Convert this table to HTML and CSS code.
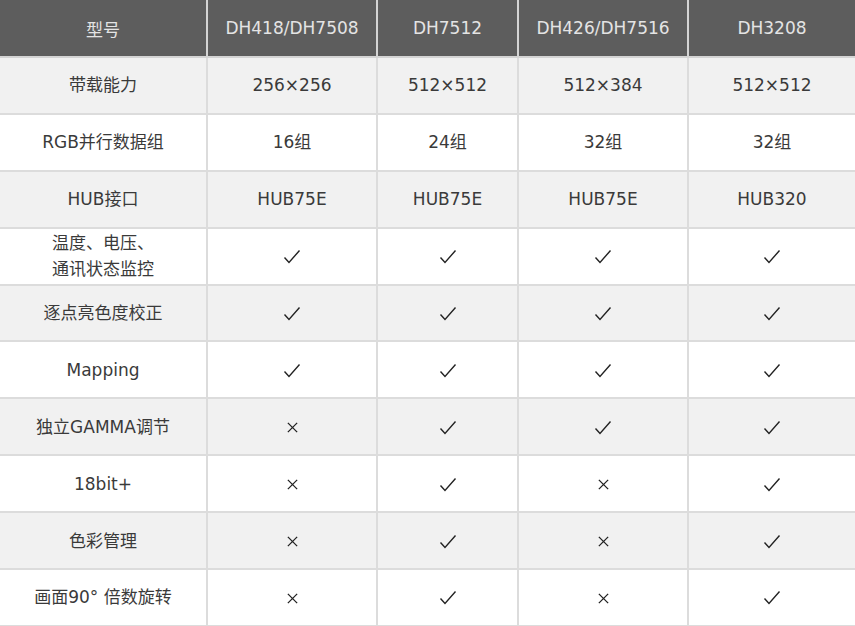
FILE: index.html
```html
<!DOCTYPE html>
<html lang="zh-CN">
<head>
<meta charset="utf-8">
<title>型号对比</title>
<link rel="stylesheet" href="styles.css">
</head>
<body>
<svg width="0" height="0" class="defs">
  <defs>
    <symbol id="ok" viewBox="0 0 18 16"><path d="M1.5 8.5 L6 13.5 L16.5 1.5" fill="none" stroke="#222" stroke-width="1.4" stroke-linejoin="miter"/></symbol>
    <symbol id="no" viewBox="0 0 14 14"><path d="M2 2 L12 12 M12 2 L2 12" fill="none" stroke="#222" stroke-width="1.4"/></symbol>
  </defs>
</svg>
<table class="spec">
  <colgroup>
    <col class="c0"><col class="c1"><col class="c2"><col class="c3"><col class="c4">
  </colgroup>
  <thead>
    <tr><th>型号</th><th>DH418/DH7508</th><th>DH7512</th><th>DH426/DH7516</th><th>DH3208</th></tr>
  </thead>
  <tbody>
    <tr class="alt"><td>带载能力</td><td>256×256</td><td>512×512</td><td>512×384</td><td>512×512</td></tr>
    <tr><td>RGB并行数据组</td><td>16组</td><td>24组</td><td>32组</td><td>32组</td></tr>
    <tr class="alt"><td>HUB接口</td><td>HUB75E</td><td>HUB75E</td><td>HUB75E</td><td>HUB320</td></tr>
    <tr><td>温度、电压、<br>通讯状态监控</td>
      <td><svg class="ic ok"><use href="#ok"/></svg></td><td><svg class="ic ok"><use href="#ok"/></svg></td><td><svg class="ic ok"><use href="#ok"/></svg></td><td><svg class="ic ok"><use href="#ok"/></svg></td></tr>
    <tr class="alt"><td>逐点亮色度校正</td>
      <td><svg class="ic ok"><use href="#ok"/></svg></td><td><svg class="ic ok"><use href="#ok"/></svg></td><td><svg class="ic ok"><use href="#ok"/></svg></td><td><svg class="ic ok"><use href="#ok"/></svg></td></tr>
    <tr><td>Mapping</td>
      <td><svg class="ic ok"><use href="#ok"/></svg></td><td><svg class="ic ok"><use href="#ok"/></svg></td><td><svg class="ic ok"><use href="#ok"/></svg></td><td><svg class="ic ok"><use href="#ok"/></svg></td></tr>
    <tr class="alt"><td>独立GAMMA调节</td>
      <td><svg class="ic no"><use href="#no"/></svg></td><td><svg class="ic ok"><use href="#ok"/></svg></td><td><svg class="ic ok"><use href="#ok"/></svg></td><td><svg class="ic ok"><use href="#ok"/></svg></td></tr>
    <tr><td>18bit+</td>
      <td><svg class="ic no"><use href="#no"/></svg></td><td><svg class="ic ok"><use href="#ok"/></svg></td><td><svg class="ic no"><use href="#no"/></svg></td><td><svg class="ic ok"><use href="#ok"/></svg></td></tr>
    <tr class="alt"><td>色彩管理</td>
      <td><svg class="ic no"><use href="#no"/></svg></td><td><svg class="ic ok"><use href="#ok"/></svg></td><td><svg class="ic no"><use href="#no"/></svg></td><td><svg class="ic ok"><use href="#ok"/></svg></td></tr>
    <tr><td>画面90°&nbsp;倍数旋转</td>
      <td><svg class="ic no"><use href="#no"/></svg></td><td><svg class="ic ok"><use href="#ok"/></svg></td><td><svg class="ic no"><use href="#no"/></svg></td><td><svg class="ic ok"><use href="#ok"/></svg></td></tr>
  </tbody>
</table>
</body>
</html>
```

FILE: styles.css
```css
html, body {
  margin: 0;
  padding: 0;
  background: #ffffff;
}
.defs {
  position: absolute;
  width: 0;
  height: 0;
  overflow: hidden;
}
.spec {
  width: 855px;
  table-layout: fixed;
  border-collapse: collapse;
  font-family: "DejaVu Sans", "Noto Sans CJK SC", sans-serif;
  font-size: 17px;
  color: #3a3a3a;
}
.c0 { width: 207px; }
.c1 { width: 170px; }
.c2 { width: 141px; }
.c3 { width: 170px; }
.c4 { width: 167px; }
.spec th {
  height: 56px;
  background: #5d5d5d;
  color: #e4e4e4;
  font-weight: normal;
  font-size: 17px;
  text-align: center;
  vertical-align: middle;
  padding: 0;
  border-left: 2px solid #d4d4d4;
  border-bottom: 2px solid #d4d4d4;
}
.spec td {
  height: 54.9px;
  text-align: center;
  vertical-align: middle;
  padding: 0;
  line-height: 26px;
  border-left: 2px solid #dcdcdc;
  border-bottom: 2px solid #dcdcdc;
}
.spec th:first-child,
.spec td:first-child {
  border-left: none;
}
.spec tr.alt td {
  background: #f1f1f1;
}
.ic {
  display: inline-block;
  vertical-align: middle;
}
.ic.ok {
  width: 18px;
  height: 16px;
}
.ic.no {
  width: 13px;
  height: 13px;
}
```
